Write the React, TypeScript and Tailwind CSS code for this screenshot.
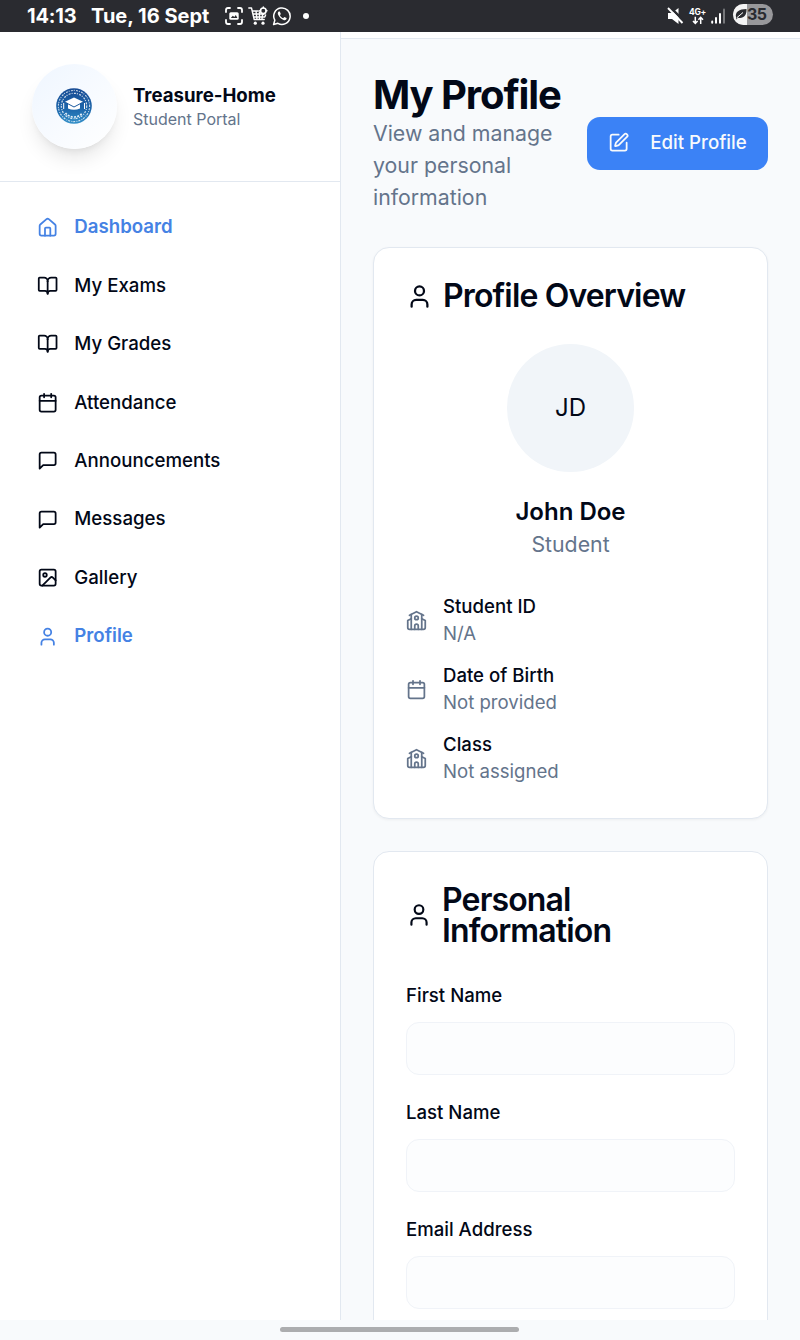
import React from "react";
import { House, BookOpen, Calendar, Image, User, SquarePen } from "lucide-react";

type IconProps = { className?: string };

const stroke = {
  viewBox: "0 0 24 24",
  fill: "none",
  stroke: "currentColor",
  strokeWidth: 2,
  strokeLinecap: "round" as const,
  strokeLinejoin: "round" as const,
};

const Message = ({ className }: IconProps) => (
  <svg {...stroke} className={className}>
    <path d="M21 15a2 2 0 0 1-2 2H7l-4 4V5a2 2 0 0 1 2-2h14a2 2 0 0 1 2 2z" />
  </svg>
);

const School = ({ className }: IconProps) => (
  <svg {...stroke} className={className}>
    <path d="M14 22v-4a2 2 0 1 0-4 0v4" />
    <path d="m18 10 4 2v8a2 2 0 0 1-2 2H4a2 2 0 0 1-2-2v-8l4-2" />
    <path d="M18 5v17M6 5v17" />
    <path d="m4 6 8-4 8 4" />
    <circle cx="12" cy="9" r="2" />
  </svg>
);

const Crest = () => (
  <svg viewBox="0 0 36 36" className="mr-px mb-px size-9">
    <defs>
      <linearGradient id="crest" x1="0" y1="0" x2="0" y2="1">
        <stop offset="0" stopColor="#174a93" />
        <stop offset="0.6" stopColor="#1e68ac" />
        <stop offset="1" stopColor="#3390c9" />
      </linearGradient>
    </defs>
    <circle cx="18" cy="18" r="17.8" fill="url(#crest)" />
    <g fill="none" stroke="#fff">
      <circle cx="18" cy="18" r="15.6" strokeWidth="1.1" strokeDasharray="1 1.3 2 .9" opacity=".75" />
      <circle cx="18" cy="18" r="12.7" strokeWidth="1.2" strokeDasharray="2 1 1 1.4" opacity=".8" />
      <path d="M9.5 25a11 11 0 0 0 17 0" strokeWidth="1.6" strokeDasharray="2 1.2" opacity=".9" />
      <path d="M7.7 15v6M28.5 15v6" strokeWidth="1" />
    </g>
    <path d="M18 9.5l9 4.2-3 1.5v5.2q-6 2.8-12 0v-5.2l-3-1.5z" fill="#fff" />
    <path d="M10.5 15l7.5 4 7.5-4" fill="none" stroke="#1b5a9f" strokeWidth="1" />
  </svg>
);

const nav = [
  { label: "Dashboard", Icon: House, active: true },
  { label: "My Exams", Icon: BookOpen },
  { label: "My Grades", Icon: BookOpen },
  { label: "Attendance", Icon: Calendar },
  { label: "Announcements", Icon: Message },
  { label: "Messages", Icon: Message },
  { label: "Gallery", Icon: Image },
  { label: "Profile", Icon: User, active: true },
];

const details = [
  { label: "Student ID", value: "N/A", Icon: School },
  { label: "Date of Birth", value: "Not provided", Icon: Calendar },
  { label: "Class", value: "Not assigned", Icon: School },
];

function StatusBar() {
  return (
    <header className="flex h-8 shrink-0 items-center bg-[#2a2b30] pr-[27px] pl-[27px] text-white">
      <span className="w-16 text-[20px] font-bold tracking-[-0.2px] whitespace-nowrap">14:13</span>
      <span className="w-[133px] text-[20px] font-bold whitespace-nowrap">Tue, 16 Sept</span>
      <svg viewBox="0 0 20 20" className="size-5" fill="none" stroke="white" strokeWidth="1.8" strokeLinecap="round">
        <path d="M2 6V4q0-2 2-2h2M14 2h2q2 0 2 2v2M18 14v2q0 2-2 2h-2M6 18H4q-2 0-2-2v-2" />
        <rect x="5.3" y="6.3" width="9.4" height="7.4" rx="1.5" fill="white" stroke="none" />
        <path d="M6.8 12l2-2.2 1.5 1.2 1.5-2 1.6 3z" fill="#2a2b30" stroke="none" />
      </svg>
      <svg viewBox="0 0 20 20" className="ml-1 size-5" fill="none" stroke="white" strokeWidth="1.4" strokeLinecap="round" strokeLinejoin="round">
        <path d="M.8 2h2.7l2.7 11.5h10M4.3 5h6M5 8h11M5.6 11h11.2l.8-2M8 5l1 8.3M11.5 6v7M14.5 9l-.6 4.3" />
        <circle cx="15.3" cy="4.8" r="2.8" strokeWidth="1.6" />
        <path d="M15.3 1v1M15.3 7.6v1M11.6 4.8h1M18 4.8h1" />
        <circle cx="7.3" cy="17.2" r="1.6" fill="white" stroke="none" />
        <circle cx="15" cy="17.2" r="1.6" fill="white" stroke="none" />
      </svg>
      <svg viewBox="0 0 20 20" className="ml-1 size-5" fill="none" stroke="white" strokeWidth="1.5">
        <path d="M1.6 18.5l1.2-4.3a8.2 8.2 0 1 1 3.1 3.1z" strokeLinejoin="round" />
        <path d="M6.7 5.4c-1 .8-1.2 2.2-.4 3.6 1.3 2.6 3.1 4.3 5.7 5.2 1.5.4 2.7-.6 2.6-2.1l-2.3-1.2-1.2 1.3c-1.4-.6-2.6-1.7-3.2-3l.9-1.2-1-2.5z" fill="white" stroke="none" />
      </svg>
      <span className="ml-[11px] size-1.5 rounded-full bg-white" />
      <svg viewBox="0 0 18 18" className="ml-auto size-[18px]">
        <path d="M1 6h4l6.5-5v16L5 12H1z" fill="white" />
        <path d="M3 0l15 15" stroke="#2a2b30" strokeWidth="2.5" />
        <path d="M1 1l14.5 15" stroke="white" strokeWidth="1.9" />
      </svg>
      <div className="ml-1 flex w-[17px] flex-col items-center">
        <span className="h-[8px] text-[8.5px] leading-[8px] font-bold tracking-[-0.3px]">4G+</span>
        <svg viewBox="0 0 12 9" className="h-[9px] w-3" fill="none" stroke="white" strokeWidth="1.5">
          <path d="M3.3.8v6.5M1 5l2.3 2.5L5.6 5M8.7 8V1.3M6.4 3.8l2.3-2.5L11 3.8" />
        </svg>
      </div>
      <svg viewBox="0 0 14 16" className="ml-[5px] h-4 w-3.5 shrink-0" strokeWidth="2" strokeLinecap="round">
        <path d="M1.2 13.6v1.2M5 10v4.8M9 6v8.8" stroke="white" />
        <path d="M13 1.5v13.3" stroke="#77787b" />
      </svg>
      <div className="mb-1 ml-2 flex h-[21px] w-10 shrink-0 items-center overflow-hidden rounded-full bg-[#98989b] text-[#2a2b30]">
        <span className="flex h-full w-3.5 shrink-0 items-center justify-end bg-[#f4f4f4]">
          <svg viewBox="0 0 12 12" className="size-3">
            <path d="M1 9C0 4 4 1 11.5 1c.5 6-3 10-8.5 8.7L1 11.5z" fill="#2a2b30" />
            <path d="M1.5 10L8 4.5" stroke="white" strokeWidth="1" />
          </svg>
        </span>
        <span className="text-[16px] leading-none font-bold tracking-[-0.6px]">35</span>
      </div>
    </header>
  );
}

function Sidebar() {
  return (
    <aside className="w-[341px] shrink-0 border-r border-[#e2e8f0] bg-white">
      <div className="flex h-[150px] items-center border-b border-[#e2e8f0] pl-8">
        <div className="flex size-[85px] items-center justify-center rounded-full bg-linear-to-br from-[#eff6ff] to-white shadow-[0_13px_20px_-4px_rgba(0,0,0,0.1),0_5px_8px_-5px_rgba(0,0,0,0.1)]">
          <Crest />
        </div>
        <div className="ml-4">
          <div className="text-[18.6px] leading-[23px] font-bold">Treasure-Home</div>
          <div className="pt-px text-[16px] leading-[22px] text-[#64748b]">Student Portal</div>
        </div>
      </div>
      <nav className="flex flex-col pt-4">
        {nav.map(({ label, Icon, active }) => (
          <a
            key={label}
            className={`flex h-[58.45px] items-center gap-4 pl-[37px] text-[18.66px] ${
              active ? "font-semibold text-[#4582e4]" : "font-medium"
            }`}
          >
            <Icon className="size-[21.3px]" />
            <span>{label}</span>
          </a>
        ))}
      </nav>
    </aside>
  );
}

function Field({ label }: { label: string }) {
  return (
    <div className="flex h-[117.2px] flex-col">
      <label className="pt-px text-[18.6px] leading-[19px] font-medium">{label}</label>
      <input
        disabled
        className="mt-[17px] h-[53px] w-full rounded-[13px] border border-[#f0f3f8] bg-[#fcfdfe]"
      />
    </div>
  );
}

export default function App() {
  return (
    <div className="flex h-[1340px] w-[800px] flex-col overflow-hidden bg-[#f8fafc] font-[Inter,sans-serif] text-[#020817]">
      <StatusBar />
      <div className="flex min-h-0 flex-1 overflow-hidden">
        <Sidebar />
        <main className="flex-1 overflow-hidden">
          <div className="h-[7px] border-b border-[#e2e8f0] bg-white" />
          <div className="px-8 pt-8">
            <div className="flex items-center justify-between">
              <div>
                <h1 className="text-[40px] leading-[48px] font-bold tracking-[-1.1px] whitespace-nowrap">My Profile</h1>
                <p className="-mt-0.5 w-[190px] pb-0.5 text-[21.3px] leading-8 text-[#64748b]">View and manage your personal information</p>
              </div>
              <button className="flex h-[53px] w-[181px] items-center rounded-[13px] bg-[#3b82f6] pl-[21px] text-[18.66px] font-medium text-[#f8fafc]">
                <SquarePen className="size-[21.3px]" />
                <span className="ml-[21px] whitespace-nowrap">Edit Profile</span>
              </button>
            </div>

            <section className="mt-8 h-[572px] rounded-2xl border border-[#e2e8f0] bg-white px-8 pt-8 shadow-[0_1px_3px_rgba(0,0,0,0.05)]">
              <h2 className="flex items-center text-[32px] leading-8 font-semibold tracking-[-0.85px]">
                <User className="size-[27px]" />
                <span className="ml-[10px] whitespace-nowrap">Profile Overview</span>
              </h2>
              <div className="mt-8 flex flex-col items-center">
                <div className="flex h-32 w-[127px] items-center justify-center rounded-full bg-[#f1f5f9] text-[24px]">JD</div>
                <div className="mt-[22px] text-[24px] leading-9 font-semibold">John Doe</div>
                <div className="-mt-px text-[21.3px] leading-[30px] text-[#64748b]">Student</div>
              </div>
              <div className="mt-[34px] flex flex-col gap-4">
                {details.map(({ label, value, Icon }) => (
                  <div key={label} className="flex h-[53px] items-center gap-4">
                    <Icon className="mt-px size-[21px] text-[#64748b]" />
                    <div className="text-[18.6px] leading-[27px]">
                      <div className="font-medium">{label}</div>
                      <div className="text-[#64748b]">{value}</div>
                    </div>
                  </div>
                ))}
              </div>
            </section>

            <section className="mt-8 h-[600px] rounded-2xl border border-[#e2e8f0] bg-white px-8 pt-8">
              <h2 className="flex items-center text-[32px] leading-[31px] font-semibold tracking-[-0.85px]">
                <User className="size-[26px] shrink-0" />
                <span className="ml-[10px]">
                  Personal
                  <br />
                  Information
                </span>
              </h2>
              <div className="mt-[39px]">
                <Field label="First Name" />
                <Field label="Last Name" />
                <Field label="Email Address" />
              </div>
            </section>
          </div>
        </main>
      </div>
      <footer className="flex h-5 shrink-0 justify-center pt-[7px] pr-px">
        <div className="h-[5px] w-[239px] rounded-full bg-[#acadaf]" />
      </footer>
    </div>
  );
}
